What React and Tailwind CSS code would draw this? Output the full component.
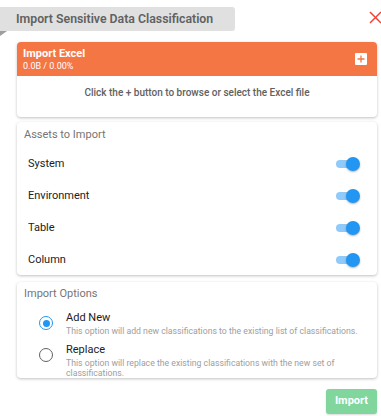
import { useState } from 'react';

const assets = ['System', 'Environment', 'Table', 'Column'];

const options = [
  { id: 'add', label: 'Add New', desc: 'This option will add new classifications to the existing list of classifications.' },
  { id: 'replace', label: 'Replace', desc: 'This option will replace the existing classifications with the new set of classifications.' },
];

const Toggle = () => (
  <div className="relative w-[22px] h-[14px] flex items-center">
    <div className="w-[21px] h-[8px] rounded-full bg-[#90caf9]" />
    <div className="absolute right-[-2px] w-[14px] h-[14px] rounded-full bg-[#2196f3] shadow-[0_1px_2px_rgba(0,0,0,0.3)]" />
  </div>
);

const Radio = ({ checked }) => (
  <div className={`w-[14px] h-[14px] rounded-full border-[1.5px] flex items-center justify-center ${checked ? 'border-[#2196f3]' : 'border-[#616161]'}`}>
    {checked && <div className="w-[7px] h-[7px] rounded-full bg-[#2196f3]" />}
  </div>
);

export default function App() {
  const [option, setOption] = useState('add');

  return (
    <div className="w-[381px] h-[416px] overflow-hidden bg-white font-['Roboto',sans-serif]">
      {/* Header */}
      <div className="flex items-start justify-between h-[42px]">
        <div className="relative mt-[7px] shrink-0">
          <div className="w-[235px] h-[24px] bg-[#e0e0e0] rounded-tr-[3px] rounded-br-[3px] flex items-center pl-[16px]">
            <span className="text-[12.3px] font-semibold text-[#616161] whitespace-nowrap">Import Sensitive Data Classification</span>
          </div>
          <div className="absolute left-0 top-[24px] w-0 h-0 border-t-[5px] border-t-[#9e9e9e] border-r-[7px] border-r-transparent" />
        </div>
        <button className="mt-[11px] mr-[-1px] text-[#f44336]">
          <svg width="13" height="13" viewBox="0 0 13 13" fill="none" stroke="currentColor" strokeWidth="1.5">
            <path d="M1 1L12 12M12 1L1 12" />
          </svg>
        </button>
      </div>

      <div className="ml-[17px] w-[360px] flex flex-col gap-[5px]">
        {/* Import Excel */}
        <div className="rounded-[4px] bg-white shadow-[0_1px_3px_rgba(0,0,0,0.25)] overflow-hidden">
          <div className="h-[34px] bg-[#f47645] flex items-center justify-between pl-[6px] pr-[10px]">
            <div className="flex flex-col leading-none text-white">
              <span className="text-[11px] font-bold">Import Excel</span>
              <span className="text-[9px] mt-[3px]">0.0B / 0.00%</span>
            </div>
            <div className="w-[12px] h-[12px] bg-white rounded-[1px] flex items-center justify-center">
              <svg width="8" height="8" viewBox="0 0 8 8" stroke="#f47645" strokeWidth="1.3">
                <path d="M4 0.5V7.5M0.5 4H7.5" />
              </svg>
            </div>
          </div>
          <div className="h-[41px] pt-[11px] text-center leading-[12px] text-[10px] font-medium text-[#616161]">
            Click the + button to browse or select the Excel file
          </div>
        </div>

        {/* Assets */}
        <div className="rounded-[4px] bg-white shadow-[0_1px_3px_rgba(0,0,0,0.25)] h-[153px] pt-[6px] px-[7px]">
          <div className="text-[11px] text-[#757575] h-[14px] leading-[14px]">Assets to Import</div>
          <div className="mt-[6px] flex flex-col">
            {assets.map((a) => (
              <div key={a} className="h-[32px] flex items-center justify-between pl-[4px] pr-[12px]">
                <span className="text-[11px] text-[#212121]">{a}</span>
                <Toggle />
              </div>
            ))}
          </div>
        </div>

        {/* Import Options */}
        <div className="mt-[2px] rounded-[4px] bg-white shadow-[0_1px_3px_rgba(0,0,0,0.25)] h-[96px] pt-[5px] px-[7px]">
          <div className="text-[11px] text-[#757575] h-[14px] leading-[14px]">Import Options</div>
          <div className="mt-[10px] flex flex-col gap-[7px]">
            {options.map((o) => (
              <div key={o.id} className="flex items-start cursor-pointer" onClick={() => setOption(o.id)}>
                <div className="w-[42px] shrink-0 flex justify-center pt-[5px] pl-[2px]">
                  <Radio checked={option === o.id} />
                </div>
                <div className="flex flex-col">
                  <span className="text-[11px] text-[#212121] leading-[14px]">{o.label}</span>
                  <span className="text-[8.7px] text-[#9e9e9e] leading-[10px] mt-[1px]">{o.desc}</span>
                </div>
              </div>
            ))}
          </div>
        </div>

        <div className="flex justify-end mt-[6px]">
          <button className="w-[51px] h-[25px] rounded-[3px] bg-[#80d69d] text-white text-[11px] font-bold shadow-[0_1px_2px_rgba(0,0,0,0.15)]">
            Import
          </button>
        </div>
      </div>
    </div>
  );
}
